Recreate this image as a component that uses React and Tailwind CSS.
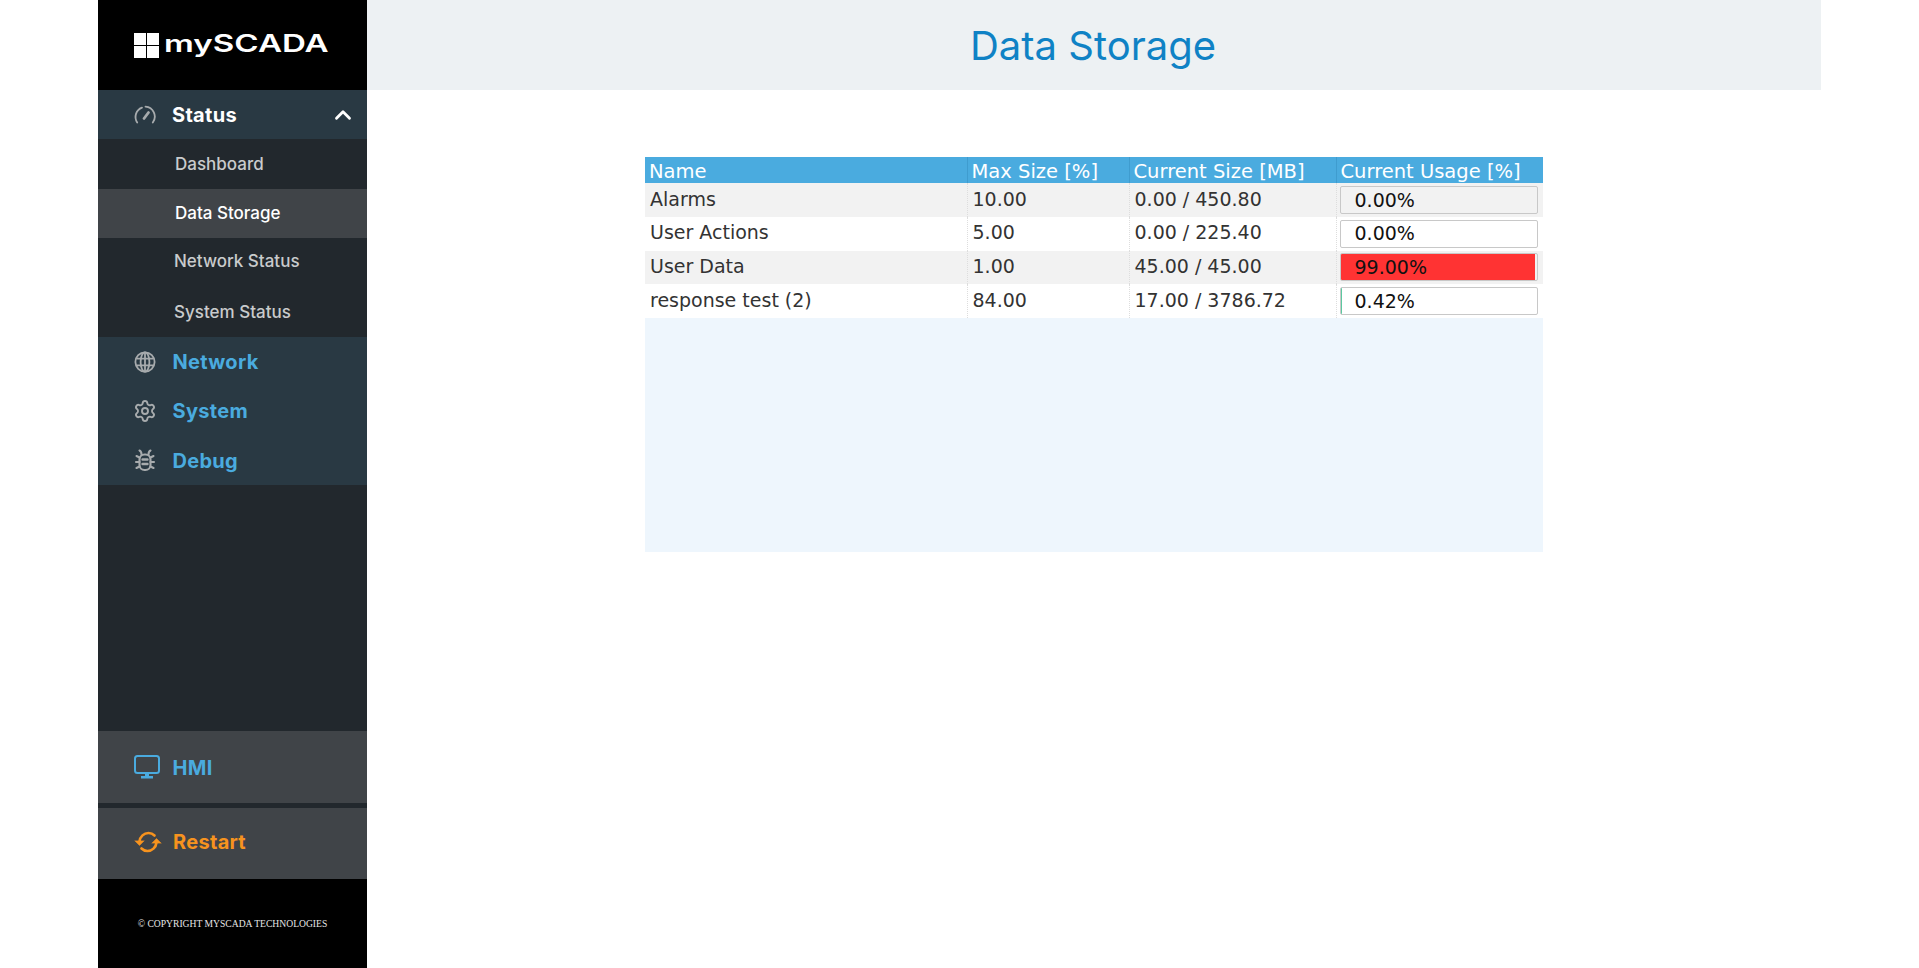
import { ChevronUp, Settings } from "lucide-react";

const menuFont = "font-['Inter','Noto_Sans',sans-serif]";

const statusItems = [
  { label: "Dashboard", cls: "pl-[77px] pt-[2px] text-[#c9cbcc]" },
  { label: "Data Storage", cls: "pl-[77px] bg-[#404448] text-white" },
  { label: "Network Status", cls: "pl-[76px] pb-[3px] text-[#c9cbcc]" },
  { label: "System Status", cls: "pl-[76px] text-[#c9cbcc]" },
];

const rows = [
  { name: "Alarms", max: "10.00", size: "0.00 / 450.80", usage: "0.00%", pct: 0, shade: true },
  { name: "User Actions", max: "5.00", size: "0.00 / 225.40", usage: "0.00%", pct: 0 },
  { name: "User Data", max: "1.00", size: "45.00 / 45.00", usage: "99.00%", pct: 99, shade: true, color: "#ff3333" },
  { name: "response test (2)", max: "84.00", size: "17.00 / 3786.72", usage: "0.42%", pct: 0.42, color: "#5cc8a0" },
];

function GaugeIcon() {
  return (
    <svg width="24" height="24" viewBox="0 0 24 24" fill="none" stroke="#a7abad" strokeWidth="1.8" strokeLinecap="round">
      <path d="M4.2 19.5A10 10 0 0 1 9 4.6" />
      <path d="M12.5 3.6a10 10 0 0 1 7.3 15.9" />
      <path d="M11 15.5l4.5-6" strokeWidth="2.8" />
    </svg>
  );
}

function GlobeIcon() {
  return (
    <svg width="24" height="24" viewBox="0 0 24 24" fill="none" stroke="#a7abad" strokeWidth="1.8">
      <circle cx="12" cy="12" r="9.6" />
      <ellipse cx="12" cy="12" rx="4.4" ry="9.6" />
      <path d="M12 2.4v19.2M3.2 8.6h17.6M3.2 15.4h17.6" />
    </svg>
  );
}

function BugIcon() {
  return (
    <svg width="24" height="24" viewBox="0 0 24 24" fill="none" stroke="#a7abad" strokeWidth="2.1" strokeLinecap="round">
      <rect x="6.500" y="6.500" width="11" height="15.500" rx="5" />
      <path d="M9.500 11.500h5M9.500 16h5" strokeWidth="2.400" />
      <path d="M8.500 6.500C8.500 4.500 7.500 3 6.500 2.500M15.500 6.500c0-2 1-3.500 2-4" />
      <path d="M6.500 9.500L3.500 8M17.500 9.500L20.500 8M6.500 14H3M17.500 14H21M6.500 18.500L3.500 20M17.500 18.500L20.500 20" />
    </svg>
  );
}

function MonitorIcon() {
  return (
    <svg width="26" height="24" viewBox="0 0 26 24" fill="#4aabdf" stroke="none">
      <rect x="1" y="1" width="24" height="17" rx="2.500" fill="none" stroke="#4aabdf" strokeWidth="2" />
      <rect x="11" y="18" width="4" height="3.500" />
      <rect x="7" y="21" width="12" height="2.500" />
    </svg>
  );
}

function RestartIcon() {
  return (
    <svg width="28" height="24" viewBox="0 0 28 24" fill="none" stroke="#f7931e" strokeWidth="2.600" strokeLinecap="round">
      <path d="M5.500 11.500C6 6.500 10 3 14.500 3c2.500 0 4.500 1 6 2.500" />
      <path d="M22.500 12.500C22 17.500 18 21 13.500 21c-2.500 0-4.500-1-6-2.500" />
      <path d="M1 11l4.500 4.500L10 11z" fill="#f7931e" strokeWidth="0.500" />
      <path d="M18 13l4.500-4.500L27 13z" fill="#f7931e" strokeWidth="0.500" />
    </svg>
  );
}

function Logo() {
  return (
    <div className="flex h-[90px] items-center bg-black pl-[36px]">
      <svg width="25" height="25" viewBox="0 0 25 25" className="shrink-0">
        <rect x="0" y="0" width="12" height="12" fill="#fff" />
        <rect x="13" y="0" width="12" height="12" fill="#fff" />
        <rect x="0" y="13" width="12" height="12" fill="#fff" />
        <rect x="13" y="13" width="12" height="12" fill="#fff" />
      </svg>
      <span className="mb-[3px] ml-[5px] origin-left scale-x-[1.38] text-[24px] leading-none font-semibold text-white">mySCADA</span>
    </div>
  );
}

function Sidebar() {
  const sections = [
    { label: "Network", icon: <GlobeIcon /> },
    { label: "System", icon: <Settings size={24} strokeWidth={1.9} className="text-[#a7abad]" /> },
    { label: "Debug", icon: <BugIcon /> },
  ];
  return (
    <aside className={`flex h-[968px] w-[269px] shrink-0 flex-col bg-[#22282d] ${menuFont}`}>
      <Logo />
      <div className="flex h-[49px] items-center bg-[#293943] pl-[35px] pr-[11px]">
        <GaugeIcon />
        <span className="ml-[15px] pt-[1px] text-[20px] font-bold tracking-[0.3px] text-white">Status</span>
        <ChevronUp size={26} strokeWidth={2.600} className="ml-auto text-white" />
      </div>
      {statusItems.map((item) => (
        <div key={item.label} className={`flex h-[49.500px] items-center text-[17px] font-medium ${item.cls}`}>
          {item.label}
        </div>
      ))}
      <div className="bg-[#293943]">
        {sections.map(({ label, icon }) => (
          <div key={label} className="flex h-[49.300px] items-center pl-[35px]">
            {icon}
            <span className="ml-[15.500px] pt-[1px] text-[20px] font-bold tracking-[0.3px] text-[#4aabdf]">{label}</span>
          </div>
        ))}
      </div>
      <div className="flex-1" />
      <div className="flex h-[72px] items-center bg-[#404448] pl-[36px]">
        <MonitorIcon />
        <span className="ml-[12.500px] pt-[2px] text-[20px] font-bold tracking-[0.3px] text-[#4aabdf]">HMI</span>
      </div>
      <div className="mt-[5px] flex h-[71px] items-center bg-[#404448] pb-[3px] pl-[36px]">
        <RestartIcon />
        <span className="ml-[11px] text-[20px] font-bold tracking-[0.3px] text-[#f7931e]">Restart</span>
      </div>
      <div className="flex h-[89px] items-center justify-center bg-black pt-[2px] font-['Liberation_Serif',serif] text-[9.600px] text-[#e6e6e6]">
        © COPYRIGHT MYSCADA TECHNOLOGIES
      </div>
    </aside>
  );
}

function UsageBar({ row }) {
  return (
    <div className="relative h-[28px] overflow-hidden rounded-[2px] border border-[#c8c8c8]">
      <div className="h-full" style={{ width: `${row.pct}%`, background: row.color }} />
      <span className="absolute inset-y-0 left-[14px] flex items-center text-[19px] text-[#111]">{row.usage}</span>
    </div>
  );
}

function StorageTable() {
  return (
    <div className="h-[395px] w-[898px] bg-[#eef6fd] font-['DejaVu_Sans',sans-serif]">
      <table className="w-full table-fixed border-collapse text-[19px] text-[#333]">
        <colgroup>
          <col className="w-[322px]" />
          <col className="w-[162px]" />
          <col className="w-[207px]" />
          <col />
        </colgroup>
        <thead>
          <tr className="h-[26px] bg-[#4aabdf] text-left text-white">
            {["Name", "Max Size [%]", "Current Size [MB]", "Current Usage [%]"].map((h) => (
              <th key={h} className="border-r border-[#3f9ccf] px-[4px] pt-[3px] text-[19.500px] leading-none font-normal whitespace-nowrap last:border-r-0">{h}</th>
            ))}
          </tr>
        </thead>
        <tbody>
          {rows.map((row) => (
            <tr key={row.name} className={`h-[33.750px] ${row.shade ? "bg-[#f2f2f2]" : "bg-white"}`}>
              <td className="border-r border-dotted border-[#ddd] px-[5px] pb-[2px]">{row.name}</td>
              <td className="border-r border-dotted border-[#ddd] px-[5px] pb-[2px]">{row.max}</td>
              <td className="border-r border-dotted border-[#ddd] px-[5px] pb-[2px]">{row.size}</td>
              <td className="pr-[5px] pl-[3px]"><UsageBar row={row} /></td>
            </tr>
          ))}
        </tbody>
      </table>
    </div>
  );
}

export default function App() {
  return (
    <div className="flex h-[968px] w-[1919px] overflow-hidden bg-white pl-[98px]">
      <Sidebar />
      <main className="w-[1454px]">
        <header className="flex h-[90px] items-center justify-center bg-[#edf1f3] pt-[2px] pr-[2px] font-['Inter','Noto_Sans',sans-serif] text-[40px] font-normal text-[#0f82c5]">
          Data Storage
        </header>
        <div className="pt-[67px] pl-[278px]">
          <StorageTable />
        </div>
      </main>
    </div>
  );
}
